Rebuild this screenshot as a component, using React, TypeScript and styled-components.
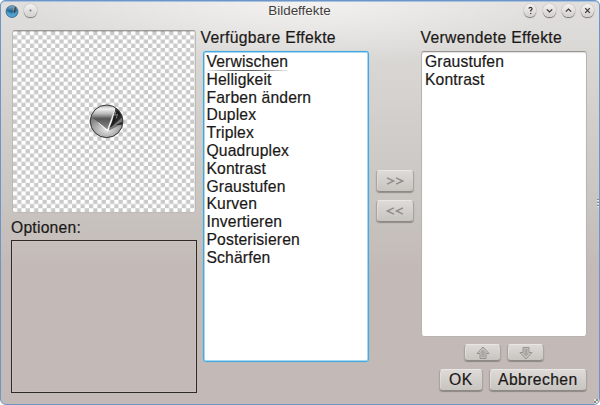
import React from 'react';
import styled, { createGlobalStyle } from 'styled-components';

const GlobalStyle = createGlobalStyle`
  * { box-sizing: border-box; }
  html, body { margin: 0; background: #fff; }
  body { width: 600px; height: 405px; overflow: hidden; }
`;

const Window = styled.div`
  position: relative;
  width: 600px;
  height: 405px;
  border: 1px solid #6d96c8;
  border-radius: 5px 5px 6px 6px;
  overflow: hidden;
  display: flex;
  flex-direction: column;
  font-family: 'Liberation Sans', Arial, sans-serif;
  font-size: 15.7px;
  color: #1b1918;
  -webkit-text-stroke: 0.2px currentColor;
  background:
    radial-gradient(ellipse 270px 64px at 50% 0, rgba(255, 255, 255, 0.6), rgba(255, 255, 255, 0) 100%),
    linear-gradient(#e1dfdd 0, #d9d7d4 60px, #d2cecb 120px, #c9c5c1 200px, #c3bab7 268px);
  box-shadow: inset 0 1px 0 #a9c0de;
`;

const TitleBar = styled.header`
  display: grid;
  grid-template-columns: 100px 1fr 100px;
  align-items: center;
  height: 19px;
  padding: 0 5px 0 4px;
`;

const TitleGroup = styled.div<{ $end?: boolean }>`
  display: flex;
  align-items: center;
  gap: ${(p) => (p.$end ? '6.4px' : '5px')};
  justify-content: ${(p) => (p.$end ? 'flex-end' : 'flex-start')};
`;

const Title = styled.h1`
  margin: 0;
  font-size: 13.4px;
  line-height: 17px;
  font-weight: 400;
  text-align: center;
  color: #3f3d3b;
  -webkit-text-stroke: 0;
  text-shadow: 0 1px 0 rgba(255, 255, 255, 0.6);
`;

const RoundButton = styled.button`
  width: 12.8px;
  height: 12.8px;
  padding: 0;
  border: 0;
  border-radius: 50%;
  display: grid;
  place-items: center;
  background: linear-gradient(#f4f3f2, #d2cfcc);
  box-shadow: 0 1px 1px rgba(60, 55, 50, 0.6), 0 0 1px rgba(60, 55, 50, 0.5);
  svg { display: block; }
`;

const Body = styled.main`
  flex: 1;
  display: grid;
  grid-template-columns: 187px 169px 51px 169px;
  padding: 8px 0 0 10px;
`;

const LeftColumn = styled.section`
  display: flex;
  flex-direction: column;
  padding-top: 2px;
`;

const Preview = styled.div`
  width: 184px;
  height: 183px;
  margin: 0 0 0 1px;
  border: 1px solid #bdb9b5;
  border-top-color: #9c9996;
  border-radius: 3px;
  overflow: hidden;
  display: flex;
  background: #fff;
`;

const Label = styled.div`
  height: 19px;
  line-height: 20px;
  white-space: nowrap;
  letter-spacing: 0.32px;
  padding: 0 0 0 2.5px;
`;

const OptionsLabel = styled(Label)`
  height: 18px;
  line-height: 18px;
  margin: 6px 0 3px;
  padding: 0;
  letter-spacing: 0.22px;
`;

const OptionsBox = styled.div`
  width: 186px;
  height: 153px;
  border: 1px solid #2d2a28;
  box-shadow: inset 0 0 0 1px rgba(210, 204, 202, 0.35);
`;

const Column = styled.section`
  display: flex;
  flex-direction: column;
`;

const EffectList = styled.ul<{ $focused?: boolean }>`
  margin: 4px 0 0 ${(p) => (p.$focused ? 5 : 3)}px;
  padding: ${(p) => (p.$focused ? '1px 2.5px' : '1px 3px')};
  width: 166px;
  height: ${(p) => (p.$focused ? 311 : 286)}px;
  list-style: none;
  letter-spacing: 0.14px;
  background: #fff;
  border-radius: 3px;
  border: 1px solid ${(p) => (p.$focused ? '#43a9de' : '#b8b4b1')};
  border-top-color: ${(p) => (p.$focused ? '#43a9de' : '#989491')};
  box-shadow: ${(p) =>
    p.$focused ? 'inset 0 0 0 1px #a5d9f1, 0 0 1px #63b8e3' : 'inset 0 1px 1px rgba(0,0,0,.12)'};
`;

const Effect = styled.li<{ $current?: boolean }>`
  height: 17.8px;
  line-height: 18px;
  width: max-content;
  white-space: nowrap;
  background: ${(p) =>
    p.$current
      ? 'linear-gradient(90deg, rgba(90,90,90,.1), #666 35%, #666 60%, rgba(90,90,90,.1)) 0 100% / 100% 1px no-repeat'
      : 'none'};
`;

const MoveColumn = styled.div`
  display: flex;
  flex-direction: column;
  align-items: center;
  gap: 8px;
  padding: 142px 0 0 4px;
`;

const PushButton = styled.button<{ $w: number; $h: number }>`
  width: ${(p) => p.$w}px;
  height: ${(p) => p.$h}px;
  padding: 0;
  border: 1px solid #a9a4a0;
  border-top-color: #e9e7e5;
  border-bottom-color: #8e8986;
  border-radius: 4px;
  display: grid;
  place-items: center;
  font: inherit;
  letter-spacing: 0.4px;
  line-height: 18px;
  color: ${(p) => (p.disabled ? '#8d8986' : '#1b1918')};
  background: linear-gradient(#dddad7, #c8c4c0);
  box-shadow: 0 1px 1px rgba(80, 74, 70, 0.45), inset 1px 0 0 rgba(255, 255, 255, 0.25);
`;

const OrderRow = styled.div`
  display: flex;
  gap: 6px;
  padding: 7px 0 0 46px;
`;

const DialogRow = styled.div`
  display: flex;
  gap: 6px;
  padding: 8px 0 0 21px;
`;

const SideGrip = styled.div<{ $corner?: boolean }>`
  position: absolute;
  right: 0;
  width: ${(p) => (p.$corner ? 5 : 2)}px;
  height: ${(p) => (p.$corner ? 5 : 8)}px;
  ${(p) => (p.$corner ? 'bottom: 0;' : 'top: 198px;')}
  background: ${(p) =>
    p.$corner
      ? 'repeating-conic-gradient(#8f8b8a 0 25%, #e5e2e0 0 50%) 0 0 / 4px 4px'
      : 'repeating-linear-gradient(#8e8a88 0 1px, #eceae8 1px 2px, transparent 2px 3px)'};
`;

const AppIcon = () => (
  <svg width="14" height="14" viewBox="0 0 14 14">
    <defs>
      <linearGradient id="blue" x1="0" y1="0" x2="0" y2="1">
        <stop offset="0" stopColor="#84b8d6" />
        <stop offset=".45" stopColor="#1f6596" />
        <stop offset="1" stopColor="#3c98cc" />
      </linearGradient>
    </defs>
    <circle cx="7" cy="7.6" r="6" fill="url(#blue)" stroke="#2d526c" strokeWidth=".6" />
    <path d="M1.3 6.5 7.2 10 9 4v6l3.6-4A6 6 0 0 1 2 10.5z" fill="#69b4db" opacity=".6" />
    <path d="M10.4 3.2 8.7 8.2" stroke="#403a32" strokeWidth="1.6" />
    <path d="M9.5 3.4 8.2 7.5" stroke="#d0b487" strokeWidth=".6" />
  </svg>
);

const TILE = 4.22;

const PreviewImage = () => (
  <svg width="182" height="181" viewBox="0 0 182 181">
    <defs>
      <pattern id="checker" width={TILE * 2} height={TILE * 2} patternUnits="userSpaceOnUse">
        <rect x={TILE} width={TILE} height={TILE} fill="#c9c9c9" />
        <rect y={TILE} width={TILE} height={TILE} fill="#c9c9c9" />
      </pattern>
      <linearGradient id="sphere" x1="0" y1="0" x2="0" y2="1">
        <stop offset="0" stopColor="#a5a5a5" />
        <stop offset=".12" stopColor="#f2f2f2" />
        <stop offset=".27" stopColor="#b8b8b8" />
        <stop offset=".42" stopColor="#555" />
        <stop offset=".7" stopColor="#858585" />
        <stop offset="1" stopColor="#555" />
      </linearGradient>
      <radialGradient id="glow" cx=".5" cy=".6" r=".6">
        <stop offset="0" stopColor="#e8e8e8" />
        <stop offset=".55" stopColor="#aaa" />
        <stop offset="1" stopColor="#777" />
      </radialGradient>
      <linearGradient id="shade" x1="0" y1="0" x2="1" y2="1">
        <stop offset="0" stopColor="#777" />
        <stop offset=".45" stopColor="#161616" />
        <stop offset="1" stopColor="#777" />
      </linearGradient>
      <clipPath id="orbClip"><circle cx="18" cy="18" r="16.3" /></clipPath>
    </defs>
    <rect width="182" height="181" fill="url(#checker)" />
    <rect width="182" height="1" fill="#000" opacity=".14" />
    <g transform="translate(75.6 72.3)">
      <circle cx="18" cy="18" r="16.3" fill="url(#sphere)" />
      <g clipPath="url(#orbClip)">
        <path d="M0 11.5 18.5 26 36 19V36H0z" fill="url(#glow)" />
        <path d="M27 4 36 9V19L22 24 20 26z" fill="url(#shade)" />
        <path d="M20 26 35 13v7L21 27z" fill="#777" />
        <path d="M27 22 36 17v4z" fill="#222" />
        <path d="M10 19.5 18.7 26.8 26.3 6.2 23.2 18 19.2 28z" fill="#fff" stroke="#fff" strokeWidth=".5" />
        <path d="M27 8.5 26 12l3-.8-1.5 4" fill="none" stroke="#999" strokeWidth=".8" />
      </g>
      <circle cx="18" cy="18" r="16.3" fill="none" stroke="#3a3a3a" strokeWidth="1" />
    </g>
  </svg>
);

const glyphs: Record<string, string> = {
  down: 'M3.8 5.3 6.5 8 9.2 5.3',
  up: 'M3.8 7.7 6.5 5l2.7 2.7',
  close: 'M4.2 4.2 8.8 8.8M8.8 4.2 4.2 8.8',
  help: 'M4.9 4.6Q5 3.3 6.5 3.3T8.1 4.7Q8.1 5.5 6.7 6.5V7.6M6.7 9v1',
};

const Glyph = ({ name }: { name: string }) => (
  <svg width="13" height="13" viewBox="0 0 13 13">
    <path d={glyphs[name]} fill="none" stroke="#393735" strokeWidth="1.2" />
  </svg>
);

const Chevron = ({ left }: { left?: boolean }) => (
  <svg width="18" height="8" viewBox="0 0 18 8">
    <path
      d={left ? 'M8 .8 1.3 4 8 7.2M17 .8 10.3 4l6.7 3.2' : 'M1 .8 7.7 4 1 7.2M10 .8 16.7 4 10 7.2'}
      fill="none"
      stroke="#918d8a"
      strokeWidth="1.4"
    />
  </svg>
);

const Arrow = ({ down }: { down?: boolean }) => (
  <svg width="14" height="14" viewBox="0 0 14 14">
    <g transform={down ? 'rotate(180 7 7)' : undefined}>
      <path d="M7 1 13 7.5H10V12.5H4V7.5H1z" fill="#c6c3c0" stroke="#918d8a" strokeWidth=".9" />
      <path d="M7 3.5 10.2 6.8H8.6V11.2H5.4V6.8H3.8z" fill="#aaa6a3" />
    </g>
  </svg>
);

const available = [
  'Verwischen', 'Helligkeit', 'Farben ändern', 'Duplex', 'Triplex', 'Quadruplex',
  'Kontrast', 'Graustufen', 'Kurven', 'Invertieren', 'Posterisieren', 'Schärfen',
];
const used = ['Graustufen', 'Kontrast'];

export default function App() {
  return (
    <>
      <GlobalStyle />
      <Window>
        <TitleBar>
          <TitleGroup>
            <AppIcon />
            <RoundButton aria-label="Menü">
              <svg width="3" height="3"><circle cx="1.5" cy="1.5" r="1" fill="#777" /></svg>
            </RoundButton>
          </TitleGroup>
          <Title>Bildeffekte</Title>
          <TitleGroup $end>
            {['help', 'down', 'up', 'close'].map((name) => (
              <RoundButton key={name} aria-label={name}><Glyph name={name} /></RoundButton>
            ))}
          </TitleGroup>
        </TitleBar>
        <Body>
          <LeftColumn>
            <Preview><PreviewImage /></Preview>
            <OptionsLabel>Optionen:</OptionsLabel>
            <OptionsBox />
          </LeftColumn>
          <Column>
            <Label>Verfügbare Effekte</Label>
            <EffectList $focused>
              {available.map((name, i) => <Effect key={name} $current={i === 0}>{name}</Effect>)}
            </EffectList>
          </Column>
          <MoveColumn>
            <PushButton $w={38} $h={22} disabled aria-label="Hinzufügen"><Chevron /></PushButton>
            <PushButton $w={38} $h={22} disabled aria-label="Entfernen"><Chevron left /></PushButton>
          </MoveColumn>
          <Column>
            <Label>Verwendete Effekte</Label>
            <EffectList>
              {used.map((name) => <Effect key={name}>{name}</Effect>)}
            </EffectList>
            <OrderRow>
              <PushButton $w={37} $h={17} disabled aria-label="Nach oben"><Arrow /></PushButton>
              <PushButton $w={37} $h={17} disabled aria-label="Nach unten"><Arrow down /></PushButton>
            </OrderRow>
            <DialogRow>
              <PushButton $w={44} $h={22}>OK</PushButton>
              <PushButton $w={99} $h={22}>Abbrechen</PushButton>
            </DialogRow>
          </Column>
        </Body>
        <SideGrip />
        <SideGrip $corner />
      </Window>
    </>
  );
}
